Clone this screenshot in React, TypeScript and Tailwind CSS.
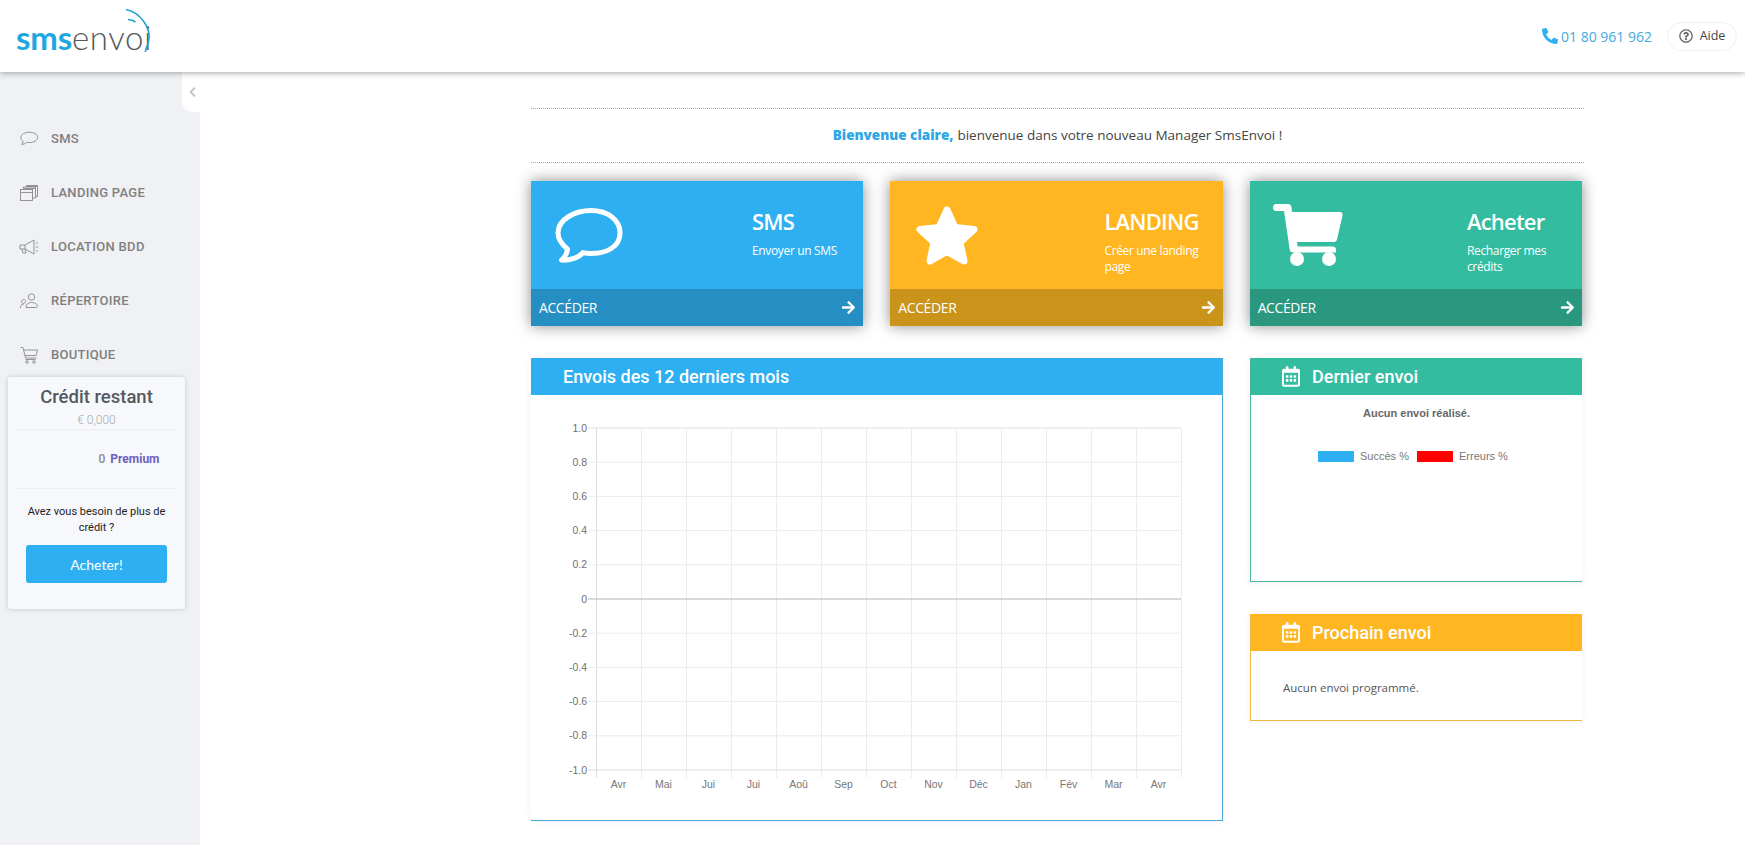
import { ChevronLeft } from "lucide-react";
import { FaArrowRight, FaPhoneAlt, FaRegCalendarAlt, FaRegQuestionCircle } from "react-icons/fa";
import type { ReactNode } from "react";

const months = ["Avr", "Mai", "Jui", "Jui", "Aoû", "Sep", "Oct", "Nov", "Déc", "Jan", "Fév", "Mar", "Avr"];
const ticks = ["1.0", "0.8", "0.6", "0.4", "0.2", "0", "-0.2", "-0.4", "-0.6", "-0.8", "-1.0"];

function NavIcon({ children }: { children: ReactNode }) {
  return (
    <svg viewBox="0 0 20 20" className="w-5 h-5 shrink-0 fill-none stroke-[#8a8a8a]" strokeWidth="0.9">
      {children}
    </svg>
  );
}

const nav = [
  {
    label: "SMS",
    icon: (
      <NavIcon>
        <path d="M10.5 3.2c4.4 0 8 1.9 8 5.2 0 3.200-3.700 5.200-8 5.200-1 0-1.900-.1-2.800-.3-1 1.300-3 2-5.200 2.100.9-.8 1.500-1.700 1.600-3-1.400-.9-2.200-2.300-2.200-3.900 0-3.300 4.200-5.300 8.600-5.300z" />
      </NavIcon>
    ),
  },
  {
    label: "LANDING PAGE",
    icon: (
      <NavIcon>
        <rect x="1.500" y="6.500" width="12" height="11" />
        <path d="M1.500 9.500h12M4.500 6.500v-2.500h12v11h-3M4.500 5.500h12M7.500 4v-1.500h11v11h-2M8 3.500h10" />
      </NavIcon>
    ),
  },
  {
    label: "LOCATION BDD",
    icon: (
      <NavIcon>
        <path d="M1 8h5l9-5v14l-9-5H1zM6 8v4M3 12l1 4h3l-1-4M17 6h2M17 10h2M17 14h2" />
      </NavIcon>
    ),
  },
  {
    label: "RÉPERTOIRE",
    icon: (
      <NavIcon>
        <circle cx="12.500" cy="6" r="3.200" />
        <path d="M7 16.500c0-3.500 2.500-5 5.500-5s6 1.500 6 3.500c0 1-.6 1.500-1.500 1.500zM4.500 12.500a2 2 0 1 1 .1 0M1.500 17c-.5-2 .5-3.500 3-3.500" />
      </NavIcon>
    ),
  },
  {
    label: "BOUTIQUE",
    icon: (
      <NavIcon>
        <path d="M1.500 2.500h2.500l2.500 10.500h11M4.600 5h14l-1.500 5.500H5.800M6.500 14.500h10" />
        <circle cx="8" cy="17" r="1.300" />
        <circle cx="15" cy="17" r="1.300" />
      </NavIcon>
    ),
  },
];

function Logo() {
  return (
    <div className="relative w-[150px] h-[72px] ml-4 flex items-center pt-[3px] font-['Lato',sans-serif] text-[33px] leading-none tracking-[-0.2px]">
      <span className="font-bold text-[#1fa8e0]">sms</span>
      <span className="font-light text-[#55585c] tracking-[0.6px]">envoi</span>
      <svg viewBox="0 0 150 72" className="absolute left-[-16px] top-0 w-[150px] h-[72px] fill-none stroke-[#2aa3cf]">
        <path d="M126 9.500c13 2.500 27 18 22 34-1.200 3.800-2.600 6.200-2.600 8.500" strokeWidth="1.700" />
        <path d="M128 19.500c3 .2 5.500 1 7.500 2.500" strokeWidth="1.700" />
      </svg>
    </div>
  );
}

function StatCard({
  bg,
  foot,
  title,
  sub,
  titleClass,
  icon,
}: {
  bg: string;
  foot: string;
  title: string;
  sub: string;
  titleClass: string;
  icon: ReactNode;
}) {
  return (
    <div className={`flex-1 flex flex-col h-[145px] shadow-[0_0_14px_rgba(0,0,0,0.45)] text-white font-['Open_Sans',sans-serif] ${bg}`}>
      <div className="flex-1 flex">
        <div className="w-[221px] flex items-center pl-6">{icon}</div>
        <div className="pt-[24px]">
          <div className={`font-semibold text-[22px] leading-[32px] tracking-[-0.8px] ${titleClass}`}>{title}</div>
          <div className="text-[12px] leading-4 mt-[6px] tracking-[-0.35px]">{sub}</div>
        </div>
      </div>
      <div className={`h-[37px] flex items-center justify-between pl-2 pr-[7px] text-[14px] tracking-[-0.4px] ${foot}`}>
        <span>ACCÉDER</span>
        <FaArrowRight className="w-[15px] h-[15px]" />
      </div>
    </div>
  );
}

function Chart() {
  const xs = Array.from({ length: 14 }, (_, i) => 65 + i * 45);
  const ys = ticks.map((_, i) => 33 + i * 34.2);
  return (
    <svg viewBox="0 0 690 424" className="w-[690px] h-[424px] block font-['Liberation_Sans',sans-serif]">
      {xs.map((x, i) => (
        <line key={x} x1={x + 0.5} x2={x + 0.5} y1={33} y2={383} stroke={i === 0 ? "#dcdcdc" : "#ececec"} />
      ))}
      {ys.map((y, i) => (
        <line
          key={y}
          x1={57}
          x2={650}
          y1={y}
          y2={y}
          stroke={i === 5 ? "#b4b4b4" : i === 0 || i === 10 ? "#dedede" : "#ececec"}
        />
      ))}
      {ticks.map((t, i) => (
        <text key={t} x={56} y={ys[i] + 3.500} textAnchor="end" fontSize="10.500" fill="#707070">
          {t}
        </text>
      ))}
      {months.map((m, i) => (
        <text key={i} x={87.500 + i * 45} y={393} textAnchor="middle" fontSize="10.500" fill="#777777">
          {m}
        </text>
      ))}
    </svg>
  );
}

function PanelHead({ title, bg, icon }: { title: string; bg: string; icon?: boolean }) {
  return (
    <div className={`h-[37px] flex items-center text-white font-['Roboto',sans-serif] font-medium text-[18px] ${bg} ${icon ? "pl-[31px]" : "pl-8"}`}>
      {icon && <FaRegCalendarAlt className="w-[18px] h-[21px] mr-[12px]" />}
      {title}
    </div>
  );
}

export default function App() {
  return (
    <div className="h-[845px] overflow-hidden flex flex-col bg-white font-['Open_Sans',sans-serif]">
      {/* header */}
      <header className="relative z-10 h-[72px] shrink-0 flex items-center justify-between bg-white shadow-[0_1px_6px_rgba(0,0,0,0.35)] pr-2">
        <Logo />
        <div className="flex items-center">
          <a className="flex items-center text-[14px] text-[#45aadb] mr-[15px]">
            <FaPhoneAlt className="w-[16px] h-[16px] mr-[3px] text-[#2eaff2]" />
            01 80 961 962
          </a>
          <div className="w-[70px] h-[29px] flex items-center justify-center gap-[7px] rounded-full border border-[#f0f0f0] text-[12.500px] text-[#444]">
            <FaRegQuestionCircle className="w-[14px] h-[14px] text-[#666]" />
            Aide
          </div>
        </div>
      </header>

      <div className="flex-1 flex min-h-0">
        {/* sidebar */}
        <aside className="relative w-[200px] shrink-0 bg-[#eff1f4] pt-[40px]">
          <div className="absolute top-0 right-0 w-[18px] h-[40px] bg-white rounded-bl-[10px] flex items-center justify-end">
            <ChevronLeft className="w-[15px] h-[18px] text-[#c4c4c4]" strokeWidth={3} />
          </div>
          <nav className="flex flex-col">
            {nav.map((item) => (
              <div key={item.label} className="h-[54px] flex items-center pl-[19px] gap-[12px] font-['Roboto',sans-serif] font-medium text-[13px] tracking-[0.3px] text-[#808080]">
                {item.icon}
                {item.label}
              </div>
            ))}
          </nav>
          <div className="ml-2 mt-[-5px] w-[177px] h-[232px] flex flex-col items-center bg-[#f7f8fb] rounded-[3px] shadow-[0_0_5px_rgba(0,0,0,0.18)] font-['Roboto',sans-serif]">
            <div className="pt-[7px] text-[18.500px] leading-[26px] font-medium text-[#55585e]">Crédit restant</div>
            <div className="mt-[2px] text-[12px] leading-4 text-[#aaaaaa] font-light">€ 0,000</div>
            <div className="w-[160px] mt-[1px] border-t border-[#eceef1]" />
            <div className="w-[160px] h-[58px] flex items-center pl-[82px] text-[12px]">
              <span className="text-[#8a8a8a] mr-[5px] font-medium">0</span>
              <span className="font-bold text-[#6f5fbf]">Premium</span>
            </div>
            <div className="w-[160px] border-t border-[#eceef1]" />
            <div className="mt-[15px] w-[150px] text-center text-[11px] leading-4 text-[#222]">
              Avez vous besoin de plus de crédit ?
            </div>
            <button className="mt-[9px] w-[141px] h-[38px] rounded-[3px] bg-[#2eaff2] text-white text-[14px] font-['Lato',sans-serif]">
              Acheter!
            </button>
          </div>
        </aside>

        {/* main */}
        <main className="flex-1 pl-[331px] pr-[161px] pt-[36px]">
          <div className="h-[55px] flex items-center justify-center border-y border-dotted border-[#a8a8a8] text-[13.500px] text-[#444]">
            <span className="font-extrabold text-[#2ba6e6] mr-1">Bienvenue claire,</span>
            bienvenue dans votre nouveau Manager SmsEnvoi !
          </div>

          <div className="mt-[18px] w-[1051px] flex gap-[27px]">
            <StatCard
              bg="bg-[#2eaff2]"
              foot="bg-[#258fc4]"
              title="SMS"
              sub="Envoyer un SMS"
              titleClass=""
              icon={
                <svg viewBox="0 0 68 56" className="w-[68px] h-[56px] fill-none stroke-white" strokeWidth="5">
                  <path d="M36 3.500c15.500 0 29 8.500 29 22.500S51.500 46.500 36 46.500c-3 0-5.500-.3-8-.9-4 5-13 8-21.500 7.500 3-2.500 5.500-6.500 6-11C7 37.500 3 32.500 3 26 3 12 20.500 3.500 36 3.500z" strokeLinejoin="round" />
                </svg>
              }
            />
            <StatCard
              bg="bg-[#ffb621]"
              foot="bg-[#c99419]"
              title="LANDING"
              sub="Créer une landing page"
              titleClass=""
              icon={
                <svg viewBox="0 0 64 60" className="w-[64px] h-[60px] fill-white stroke-white ml-[1px]" strokeWidth="7" strokeLinejoin="round">
                  <path d="M32 5l8 17.500 19 2-14 13 4 18.500-17-9.500-17 9.500 4-18.500-14-13 19-2z" />
                </svg>
              }
            />
            <StatCard
              bg="bg-[#33bc9f]"
              foot="bg-[#2a977f]"
              title="Acheter"
              sub="Recharger mes crédits"
              titleClass=""
              icon={
                <svg viewBox="0 0 70 62" className="w-[70px] h-[62px] fill-white -ml-[1px]">
                  <path d="M3 0h12c2 0 3 1 3.500 3l.5 5h48c2 0 3 1.500 2.500 3.500l-5.500 24c-.3 1.500-1.500 2.500-3 2.500H24l.7 4.500H60c2 0 3 1.500 3 3v3H20c-2 0-3-1-3.300-3L11 7H3C1 7 0 5.500 0 3.500S1 0 3 0z" />
                  <circle cx="24" cy="55" r="7" />
                  <circle cx="56" cy="55" r="7" />
                </svg>
              }
            />
          </div>

          <div className="mt-[32px] w-[1051px] flex gap-[27px] items-start">
            <section className="w-[692px] h-[463px] border-r border-b border-[#4aa8d8] shadow-[0_0_8px_rgba(0,0,0,0.06)]">
              <PanelHead title="Envois des 12 derniers mois" bg="bg-[#2eaff2]" />
              <Chart />
            </section>

            <div className="w-[332px] flex flex-col gap-[32px]">
              <section className="h-[224px] border-l border-b border-[#4fb39d] shadow-[0_0_8px_rgba(0,0,0,0.06)]">
                <PanelHead title="Dernier envoi" bg="bg-[#33bc9f]" icon />
                <div className="pt-[11px] text-center font-['Liberation_Sans',sans-serif] font-bold text-[11px] leading-[14px] text-[#666]">
                  Aucun envoi réalisé.
                </div>
                <div className="mt-[29px] flex items-center pl-[67px] font-['Liberation_Sans',sans-serif] text-[11px] leading-[14px] text-[#777]">
                  <span className="w-9 h-[11px] bg-[#2eaff2] mr-[6px]" />
                  <span className="w-[57px]">Succès %</span>
                  <span className="w-9 h-[11px] bg-[#ff0000] mr-[6px]" />
                  Erreurs %
                </div>
              </section>

              <section className="h-[107px] border-l border-b border-[#f0b840] shadow-[0_0_8px_rgba(0,0,0,0.06)]">
                <PanelHead title="Prochain envoi" bg="bg-[#ffb621]" icon />
                <div className="pt-[29px] pl-[32px] text-[11.500px] leading-4 font-medium text-[#555]">
                  Aucun envoi programmé.
                </div>
              </section>
            </div>
          </div>
        </main>
      </div>
    </div>
  );
}
